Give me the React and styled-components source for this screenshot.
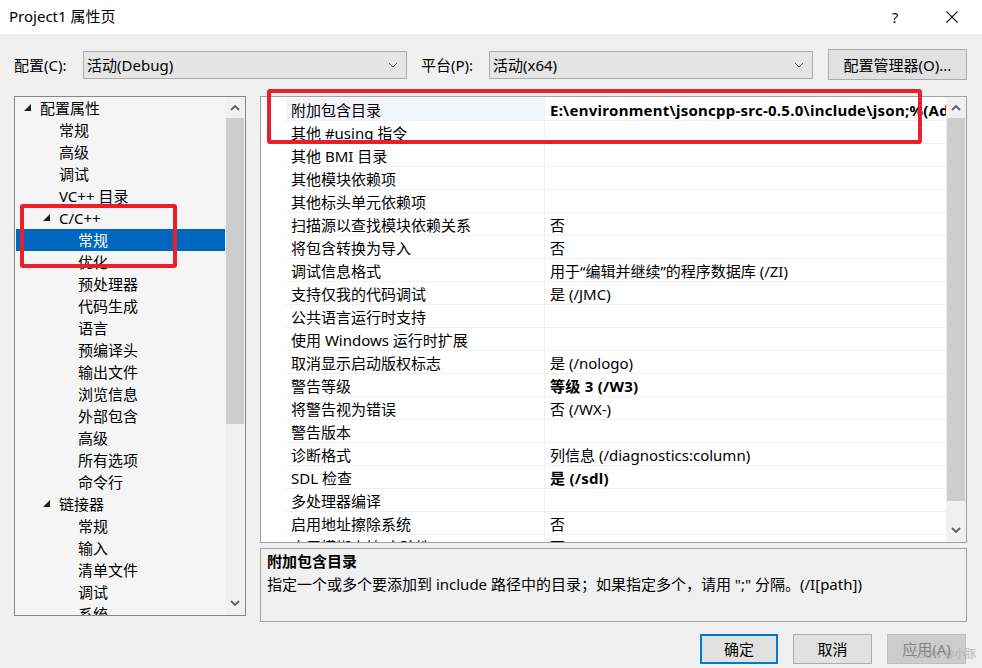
import React from "react";
import styled, { createGlobalStyle } from "styled-components";

const FONT = `"Segoe UI", "Noto Sans", "Noto Sans CJK SC", sans-serif`;

const Global = createGlobalStyle`
  html, body { margin: 0; padding: 0; background: #f0f0f0; }
  body { font-family: ${FONT}; font-size: 15px; color: #000; }
  * { box-sizing: border-box; }
`;

const Window = styled.div`
  position: relative;
  width: 982px;
  height: 668px;
  background: #f0f0f0;
  display: flex;
  flex-direction: column;
  overflow: hidden;
`;

const TitleBar = styled.div`
  height: 34px;
  background: #fff;
  display: flex;
  align-items: center;
  padding: 0 10px 0 9px;
`;
const Title = styled.div`
  flex: 1;
  font-size: 15px;
  line-height: 20px;
  margin-top: -2px;
`;
const TitleBtn = styled.div`
  width: 40px;
  height: 34px;
  margin-left: ${(p) => p.ml || 0}px;
  display: flex;
  align-items: center;
  justify-content: center;
  font-size: 15px;
  color: #111;
`;

const Body = styled.div`
  flex: 1;
  display: flex;
  flex-direction: column;
  padding: 15px 15px 0 14px;
`;

const ConfigRow = styled.div`
  display: flex;
  align-items: center;
  height: 31px;
`;
const Label = styled.div`
  width: ${(p) => p.w}px;
  font-size: 15px;
  line-height: 20px;
`;
const Combo = styled.div`
  width: 324px;
  height: 28px;
  border: 1px solid #adadad;
  background: #e5e5e5;
  display: flex;
  align-items: center;
  padding-left: 3px;
  font-size: 15px;
  margin-right: ${(p) => p.mr || 0}px;
`;
const ComboText = styled.div`
  flex: 1;
  line-height: 20px;
`;
const ComboArrow = styled.div`
  width: 26px;
  display: flex;
  justify-content: center;
`;
const Button = styled.div`
  width: ${(p) => p.w}px;
  height: ${(p) => p.h}px;
  display: flex;
  align-items: center;
  justify-content: center;
  font-size: 15px;
  line-height: 20px;
  background: ${(p) => (p.disabled ? "#cccccc" : "#e1e1e1")};
  color: ${(p) => (p.disabled ? "#838383" : "#000")};
  border: ${(p) =>
    p.primary ? "2px solid #0078d7" : p.disabled ? "1px solid #bfbfbf" : "1px solid #adadad"};
`;

const Main = styled.div`
  display: flex;
  margin-top: 16px;
  gap: 14px;
`;

const Tree = styled.div`
  width: 232px;
  height: 520px;
  border: 1px solid #828790;
  background: #f5f5f5;
  display: flex;
  overflow: hidden;
`;
const TreeList = styled.div`
  flex: 1;
  padding-left: 1px;
  overflow: hidden;
`;
const TreeRow = styled.div`
  height: 22px;
  display: flex;
  align-items: center;
  padding-left: ${(p) => p.indent}px;
  background: ${(p) => (p.sel ? "#0067c0" : "transparent")};
  color: ${(p) => (p.sel ? "#fff" : "#000")};
  font-size: 15px;
  line-height: 20px;
  white-space: nowrap;
`;
const Tri = styled.span`
  width: 16px;
  flex-shrink: 0;
  display: inline-flex;
  align-items: center;
  margin-top: -2px;
`;

const VScroll = styled.div`
  width: 20px;
  display: flex;
  flex-direction: column;
  background: #f0f0f0;
`;
const ScrollBtn = styled.div`
  height: ${(p) => p.h}px;
  display: flex;
  align-items: center;
  justify-content: center;
`;
const Thumb = styled.div`
  height: ${(p) => p.h}px;
  margin: 0 1px;
  background: #cdcdcd;
`;
const Track = styled.div`
  flex: 1;
`;

const RightCol = styled.div`
  width: 707px;
  display: flex;
  flex-direction: column;
  gap: 5px;
`;
const Grid = styled.div`
  height: 447px;
  border: 1px solid #a0a0a0;
  background: #fff;
  display: flex;
  overflow: hidden;
`;
const GridRows = styled.div`
  flex: 1;
  padding: 1px 0 0 25px;
  overflow: hidden;
`;
const GridRow = styled.div`
  height: 23px;
  display: flex;
  border-bottom: 1px solid #f0f0f5;
  font-size: 15px;
  line-height: 20px;
  white-space: nowrap;
`;
const NameCell = styled.div`
  width: 258px;
  padding: 2px 0 0 5px;
  display: flex;
  align-items: center;
  background: ${(p) => (p.sel ? "#f2f5fb" : "#fff")};
`;
const ValueCell = styled.div`
  flex: 1;
  padding: 2px 0 0 5px;
  display: flex;
  align-items: center;
  overflow: hidden;
  font-weight: ${(p) => (p.bold ? 700 : 400)};
  letter-spacing: ${(p) => (p.bold ? "0.25px" : "0")};
  border-left: 1px solid #f0f0f5;
`;

const Desc = styled.div`
  height: 74px;
  border: 1px solid #a0a0a0;
  background: #f0f0f0;
  padding: 1px 0 0 6px;
`;
const DescTitle = styled.div`
  font-weight: 700;
  font-size: 15px;
  line-height: 22px;
`;
const DescText = styled.div`
  font-size: 15px;
  line-height: 24px;
`;

const Footer = styled.div`
  display: flex;
  justify-content: flex-end;
  gap: 15px;
  margin-top: 12px;
  padding-right: 1px;
`;

const RedBox = styled.div`
  position: absolute;
  left: ${(p) => p.x}px;
  top: ${(p) => p.y}px;
  width: ${(p) => p.w}px;
  height: ${(p) => p.h}px;
  border: 4px solid #e8202a;
  border-radius: 3px;
  pointer-events: none;
`;
const Watermark = styled.div`
  position: absolute;
  left: 912px;
  top: 645px;
  font-size: 11px;
  color: rgba(160, 160, 160, 0.7);
  white-space: nowrap;
`;

const Chevron = ({ up, color = "#606060" }) => (
  <svg width="10" height="6" viewBox="0 0 10 6">
    <polyline
      points={up ? "1,5 5,1 9,5" : "1,1 5,5 9,1"}
      fill="none"
      stroke={color}
      strokeWidth="1.8"
    />
  </svg>
);
const SmallChev = () => (
  <svg width="10" height="6" viewBox="0 0 10 6">
    <polyline points="1,1 5,5 9,1" fill="none" stroke="#555" strokeWidth="1" />
  </svg>
);
const Triangle = () => (
  <svg width="7" height="7" viewBox="0 0 7 7">
    <polygon points="7,0 7,7 0,7" fill="#1e1e1e" />
  </svg>
);

const tree = [
  { t: "配置属性", lvl: 0, exp: true },
  { t: "常规", lvl: 1 },
  { t: "高级", lvl: 1 },
  { t: "调试", lvl: 1 },
  { t: "VC++ 目录", lvl: 1 },
  { t: "C/C++", lvl: 1, exp: true },
  { t: "常规", lvl: 2, sel: true },
  { t: "优化", lvl: 2 },
  { t: "预处理器", lvl: 2 },
  { t: "代码生成", lvl: 2 },
  { t: "语言", lvl: 2 },
  { t: "预编译头", lvl: 2 },
  { t: "输出文件", lvl: 2 },
  { t: "浏览信息", lvl: 2 },
  { t: "外部包含", lvl: 2 },
  { t: "高级", lvl: 2 },
  { t: "所有选项", lvl: 2 },
  { t: "命令行", lvl: 2 },
  { t: "链接器", lvl: 1, exp: true },
  { t: "常规", lvl: 2 },
  { t: "输入", lvl: 2 },
  { t: "清单文件", lvl: 2 },
  { t: "调试", lvl: 2 },
  { t: "系统", lvl: 2 },
];

const props = [
  ["附加包含目录", "E:\\environment\\jsoncpp-src-0.5.0\\include\\json;%(AdditionalIncludeDirectories)", true, true],
  ["其他 #using 指令", ""],
  ["其他 BMI 目录", ""],
  ["其他模块依赖项", ""],
  ["其他标头单元依赖项", ""],
  ["扫描源以查找模块依赖关系", "否"],
  ["将包含转换为导入", "否"],
  ["调试信息格式", "用于“编辑并继续”的程序数据库 (/ZI)"],
  ["支持仅我的代码调试", "是 (/JMC)"],
  ["公共语言运行时支持", ""],
  ["使用 Windows 运行时扩展", ""],
  ["取消显示启动版权标志", "是 (/nologo)"],
  ["警告等级", "等级 3 (/W3)", true],
  ["将警告视为错误", "否 (/WX-)"],
  ["警告版本", ""],
  ["诊断格式", "列信息 (/diagnostics:column)"],
  ["SDL 检查", "是 (/sdl)", true],
  ["多处理器编译", ""],
  ["启用地址擦除系统", "否"],
  ["启用模糊支持(实验性)", "否"],
];

const indentFor = (item) => {
  if (item.lvl === 0) return 8;
  if (item.lvl === 1) return item.exp ? 27 : 43;
  return 62;
};

export default function App() {
  return (
    <Window>
      <Global />
      <TitleBar>
        <Title>Project1 属性页</Title>
        <TitleBtn>?</TitleBtn>
        <TitleBtn ml={17}>
          <svg width="12" height="12" viewBox="0 0 12 12">
            <path d="M0.5 0.5 L11.5 11.5 M11.5 0.5 L0.5 11.5" stroke="#111" strokeWidth="1.1" />
          </svg>
        </TitleBtn>
      </TitleBar>
      <Body>
        <ConfigRow>
          <Label w={69}>配置(C):</Label>
          <Combo mr={14}>
            <ComboText>活动(Debug)</ComboText>
            <ComboArrow>
              <SmallChev />
            </ComboArrow>
          </Combo>
          <Label w={68}>平台(P):</Label>
          <Combo mr={15}>
            <ComboText>活动(x64)</ComboText>
            <ComboArrow>
              <SmallChev />
            </ComboArrow>
          </Combo>
          <Button w={139} h={31}>配置管理器(O)...</Button>
        </ConfigRow>
        <Main>
          <Tree>
            <TreeList>
              {tree.map((it, i) => (
                <TreeRow key={i} indent={indentFor(it)} sel={it.sel}>
                  {it.exp && (
                    <Tri>
                      <Triangle />
                    </Tri>
                  )}
                  <span>{it.t}</span>
                </TreeRow>
              ))}
            </TreeList>
            <VScroll>
              <ScrollBtn h={21}>
                <Chevron up />
              </ScrollBtn>
              <Thumb h={306} />
              <Track />
              <ScrollBtn h={24}>
                <Chevron />
              </ScrollBtn>
            </VScroll>
          </Tree>
          <RightCol>
            <Grid>
              <GridRows>
                {props.map(([n, v, bold, sel], i) => (
                  <GridRow key={i}>
                    <NameCell sel={sel}>{n}</NameCell>
                    <ValueCell bold={bold}>{v}</ValueCell>
                  </GridRow>
                ))}
              </GridRows>
              <VScroll>
                <ScrollBtn h={21}>
                  <Chevron up />
                </ScrollBtn>
                <Thumb h={383} />
                <Track />
                <ScrollBtn h={24}>
                  <Chevron />
                </ScrollBtn>
              </VScroll>
            </Grid>
            <Desc>
              <DescTitle>附加包含目录</DescTitle>
              <DescText>
                指定一个或多个要添加到 include 路径中的目录；如果指定多个，请用 ";" 分隔。(/I[path])
              </DescText>
            </Desc>
          </RightCol>
        </Main>
        <Footer>
          <Button w={78} h={30} primary>确定</Button>
          <Button w={79} h={30}>取消</Button>
          <Button w={79} h={30} disabled>应用(A)</Button>
        </Footer>
      </Body>
      <RedBox x={267} y={89} w={655} h={55} />
      <RedBox x={20} y={204} w={157} h={64} />
      <Watermark>CSDN @小豚</Watermark>
    </Window>
  );
}
